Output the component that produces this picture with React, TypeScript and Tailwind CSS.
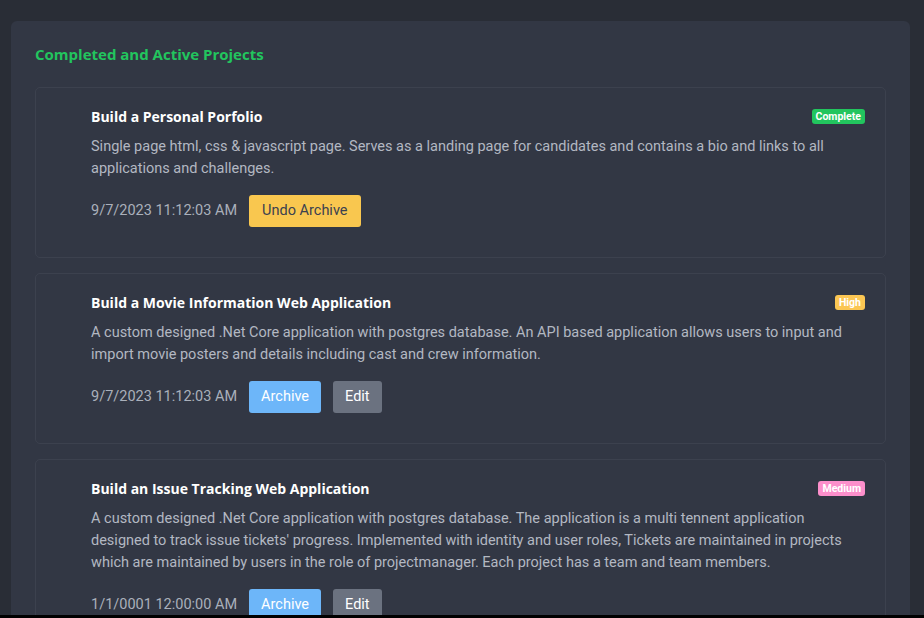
import React from "react";

type Project = {
  id: number;
  title: string;
  description: string;
  date: string;
  badge: string;
  badgeClass: string;
  archived: boolean;
};

const projects: Project[] = [
  {
    id: 1,
    title: "Build a Personal Porfolio",
    description:
      "Single page html, css & javascript page. Serves as a landing page for candidates and contains a bio and links to all applications and challenges.",
    date: "9/7/2023 11:12:03 AM",
    badge: "Complete",
    badgeClass: "bg-[#22c55e]",
    archived: true,
  },
  {
    id: 2,
    title: "Build a Movie Information Web Application",
    description:
      "A custom designed .Net Core application with postgres database. An API based application allows users to input and import movie posters and details including cast and crew information.",
    date: "9/7/2023 11:12:03 AM",
    badge: "High",
    badgeClass: "bg-[#fbc653]",
    archived: false,
  },
  {
    id: 3,
    title: "Build an Issue Tracking Web Application",
    description:
      "A custom designed .Net Core application with postgres database. The application is a multi tennent application designed to track issue tickets' progress. Implemented with identity and user roles, Tickets are maintained in projects which are maintained by users in the role of projectmanager. Each project has a team and team members.",
    date: "1/1/0001 12:00:00 AM",
    badge: "Medium",
    badgeClass: "bg-[#fc8fcb]",
    archived: false,
  },
];

const heading = { fontFamily: "'Open Sans', Lato, sans-serif" };
const body = { fontFamily: "Roboto, 'Liberation Sans', sans-serif" };

function ProjectCard({ p }: { p: Project }) {
  return (
    <div className="rounded-[5px] border border-[#3c414e] px-5 pt-5 pb-[30px]">
      <div className="pl-[35px]">
        <div className="flex h-4 items-center justify-between">
          <h3 className="text-[14px] font-bold text-white" style={heading}>
            {p.title}
          </h3>
          <span
            className={`rounded-[3px] px-[4px] text-[10.5px] leading-[15px] font-bold text-white ${p.badgeClass}`}
            style={body}
          >
            {p.badge}
          </span>
        </div>
        <p
          className="mt-3 pr-4 text-[14.5px] leading-[22px] text-[#b3b8c2]"
          style={body}
        >
          {p.description}
        </p>
        <div className="mt-[15px] flex items-center gap-3" style={body}>
          <span className="text-[14.5px] text-[#aab0bb]">{p.date}</span>
          <div className="flex gap-3">
            {p.archived ? (
              <button className="h-8 rounded-[3px] bg-[#f9c74f] px-[13px] text-[14.5px] text-[#3b4150]">
                Undo Archive
              </button>
            ) : (
              <>
                <button className="h-8 rounded-[3px] bg-[#6db6f9] px-3 text-[14.5px] text-white">
                  Archive
                </button>
                <button className="h-8 rounded-[3px] bg-[#6b7280] px-3 text-[14.5px] text-white">
                  Edit
                </button>
              </>
            )}
          </div>
        </div>
      </div>
    </div>
  );
}

export default function App() {
  return (
    <div className="flex h-[618px] flex-col bg-black">
      <div className="h-[615px] overflow-hidden bg-[#292d36] pt-[21px] pl-[11px]">
        <div className="w-[899px] rounded-[6px] bg-[#323744] px-6 pt-[23px] pb-6">
          <h2
            className="text-[15px] leading-[20px] font-bold text-[#22c55e]"
            style={heading}
          >
            Completed and Active Projects
          </h2>
          <div className="mt-[23px] flex flex-col gap-[15px]">
            {projects.map((p) => (
              <ProjectCard key={p.id} p={p} />
            ))}
          </div>
        </div>
      </div>
    </div>
  );
}
